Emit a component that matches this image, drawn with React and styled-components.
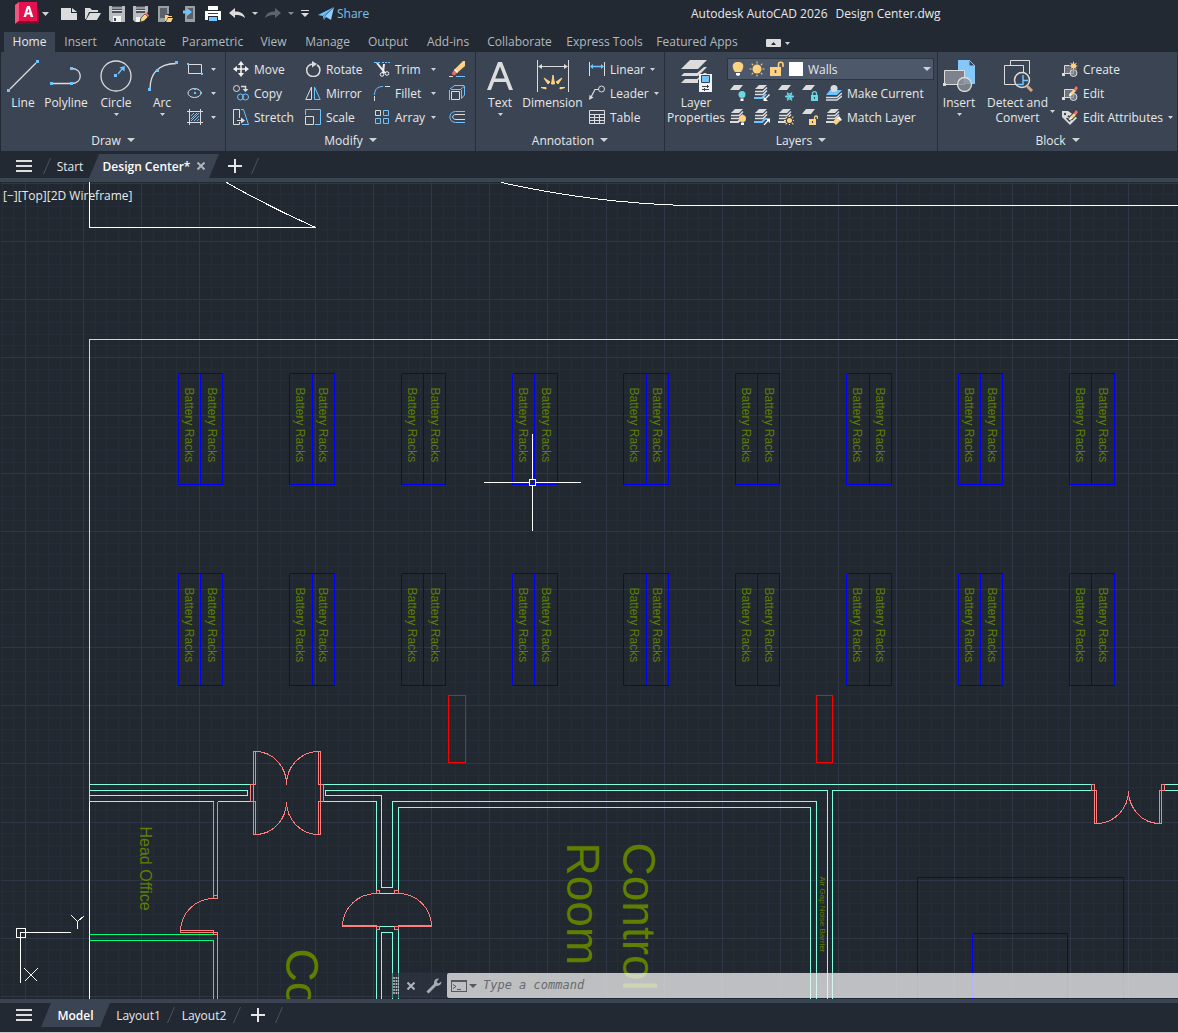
import React, { memo, useState, useCallback } from "react";
import styled, { createGlobalStyle, css } from "styled-components";

const GlobalStyle = createGlobalStyle`
  :root {
    --color-frame: #222933;
    --color-ribbon: #3b4453;
    --color-canvas: #212830;
    --color-field: #4d586b;
    --color-text: #e6e8ea;
    --color-muted: #b4b8bd;
    --color-icon: #dcdcdc;
    --color-blue: #6fc3ff;
    --color-yellow: #ffd27f;
    --color-teal: #66d9e4;
  }
  * {
    box-sizing: border-box;
  }
  body {
    margin: 0;
    background: var(--color-frame);
  }
  body, button, input, select {
    font-family: "Open Sans", "Noto Sans", sans-serif;
    font-size: 12px;
    line-height: 15px;
    color: var(--color-text);
  }
  button {
    margin: 0;
    padding: 0;
    border: 0;
    background: none;
    white-space: nowrap;
  }
  svg {
    display: block;
    flex: none;
  }
`;

/* ---------- palette shortcuts for the drawings ---------- */

const W = "var(--color-icon)";
const B = "var(--color-blue)";
const Y = "var(--color-yellow)";
const T = "var(--color-teal)";

/* ---------- icons ---------- */

const Svg = ({ w = 16, h = w, children }) => (
  <svg width={w} height={h} viewBox={`0 0 ${w} ${h}`} fill="none" aria-hidden="true">
    {children}
  </svg>
);

const Caret = ({ w = 5, color = "#d0d2d5" }) => (
  <Svg w={w} h={Math.ceil(w / 2)}>
    <path d={`M0 0H${w}L${w / 2} ${Math.ceil(w / 2)}Z`} fill={color} />
  </Svg>
);

const Dot = ({ x, y, s = 3 }) => (
  <rect x={x} y={y} width={s} height={s} fill={B} />
);

const Sheet = ({ y, fill = W }) => <path d={`M4 ${y}H13L9 ${y + 5}H0Z`} fill={fill} />;

const Stack = ({ blue }) => (
  <>
    <path d="M5 0H13L9 4H1Z" fill={W} />
    <path d="M1 6.500H9L13 2.500" stroke={W} strokeWidth="1.500" />
    <path d="M1 9.500H9L13 5.500" stroke={W} strokeWidth="1.500" />
    <path d="M0 13H8L12 9" stroke={blue ? B : W} strokeWidth="2" />
  </>
);

const PlainStar = ({ x, y, r = 3, color = Y }) => (
  <g stroke={color} strokeWidth="1">
    <circle cx={x} cy={y} r={r} fill={color} stroke="none" />
    {[0, 45, 90, 135, 180, 225, 270, 315].map((a) => (
      <path key={a} d={`M${x + r + 1} ${y}h2`} transform={`rotate(${a} ${x} ${y})`} />
    ))}
  </g>
);

const Pencil = () => (
  <>
    <path d="M7 11L8 8L12 4L14 6L10 10Z" fill={Y} />
    <path d="M12 4L14 1L16 3L14 6Z" fill="#ff6b6b" />
    <path d="M7 11L8 8L10 10Z" fill="#fff" />
  </>
);

const BlockBase = () => (
  <>
    <path d="M2.500 4.500H11.500V12.500H2.500Z" fill="#6c737e" stroke={W} />
    <rect x="0" y="12" width="3" height="3" fill={W} />
    <circle cx="11.500" cy="12" r="3.500" fill="#8a9099" fillOpacity=".7" stroke={W} />
  </>
);

const icons = {
  logo: (
    <Svg w={24} h={23}>
      <path d="M3 3L8 0H22V18L15 22H0V9Z" fill="#c2103f" />
      <path d="M0 3L4 0V19L0 22Z" fill="#f2557d" />
      <path d="M4 0H22V19H4Z" fill="#e51050" />
      <path d="M4 19H22L24 22H0Z" fill="#7d0a26" />
      <path d="M22 4L24 8V22L22 19Z" fill="#8e0b2b" />
      <path
        d="M8.500 15L12 4H14.800L18.300 15H15.600L15 12.600H11.700L11 15ZM12.300 10.500H14.400L13.400 6.600Z"
        fill="#fff"
        fillRule="evenodd"
      />
    </Svg>
  ),
  fresh: (
    <Svg>
      <path d="M0 2H10V7H16V14H0Z" fill={W} />
      <path d="M11 2L16 6H11Z" fill={W} />
    </Svg>
  ),
  open: (
    <Svg>
      <path d="M0 2H5L7 4H13V6H4L1 13H0Z" fill={W} />
      <path d="M5 7H16L12 14H1Z" fill={W} />
    </Svg>
  ),
  save: (
    <Svg>
      <path d="M0 0H16V16H2L0 14Z" fill="#b9bbbe" />
      <path d="M3 0H13V7H3Z" fill="#4a515c" />
      <path d="M3 2H13M3 4.500H13" stroke={W} />
      <path d="M4 10H12V16H4Z" fill="#f4f4f4" />
      <path d="M5 12H7V15H5Z" fill="#3b4453" />
    </Svg>
  ),
  saveAs: (
    <Svg>
      <path d="M0 0H15V6L6 15V16H2L0 14Z" fill="#b9bbbe" />
      <path d="M3 0H12V7H3Z" fill="#4a515c" />
      <path d="M3 2H12M3 4.500H12" stroke={W} />
      <path d="M3 11H7V16H3Z" fill="#f4f4f4" />
      <path d="M7 16L8 12L12 8L15 11L11 15Z" fill={Y} stroke="#222933" strokeWidth=".6" />
      <path d="M12 8L13.500 6.500L16 9.500L15 11Z" fill="#ff6b6b" />
    </Svg>
  ),
  deviceOpen: (
    <Svg>
      <path d="M1 0H12V8H8V16H1Z" fill="#9b9ea3" />
      <path d="M3 2H10V12H3Z" fill="#5b616b" />
      <path d="M8 9H11L12 10H15V11H11L9 15H8Z" fill={Y} />
      <path d="M11 12H16L14 16H9Z" fill={Y} />
    </Svg>
  ),
  deviceSave: (
    <Svg>
      <path d="M4 0H14V16H4Z" fill="#9b9ea3" />
      <path d="M6 2H12V13H6Z" fill="#5b616b" />
      <path d="M2 4.500H6V2L11 6L6 10V7.500H2Z" fill={B} />
    </Svg>
  ),
  print: (
    <Svg>
      <path d="M3 0H13V4H3Z" fill="#fff" />
      <path d="M0 5H16V14H13V10H3V14H0Z" fill="#fff" />
      <path d="M3 7.500H13" stroke="#3b4453" />
      <path d="M4 11H12V15H4Z" fill={B} />
    </Svg>
  ),
  undo: (
    <Svg>
      <path d="M0 7L6 2V5.500C11 5.500 15 7 16 12C13 9.500 10 9 6 9V12Z" fill={W} />
    </Svg>
  ),
  redo: (
    <Svg>
      <path d="M16 7L10 2V5.500C5 5.500 1 7 0 12C3 9.500 6 9 10 9V12Z" fill="#5d646e" />
    </Svg>
  ),
  custom: (
    <Svg w={8} h={8}>
      <path d="M0 .5H8" stroke={W} />
      <path d="M0 3H8L4 7Z" fill={W} />
    </Svg>
  ),
  plane: (
    <Svg w={16} h={14}>
      <path d="M0 8L16 0L5 9Z" fill={B} />
      <path d="M16 0L13 13L8 10L6 13L5 9.500Z" fill="#8fcfff" />
      <path d="M6 13L7 9L16 0" stroke="#2b5f8c" strokeWidth=".7" />
    </Svg>
  ),
  ribbonToggle: (
    <Svg w={15} h={8}>
      <rect width="15" height="8" rx="1" fill={W} />
      <path d="M5 6L7.500 3L10 6Z" fill="#222933" />
    </Svg>
  ),
  menu: (
    <Svg w={16} h={12}>
      <path d="M0 1H16M0 6H16M0 11H16" stroke={W} strokeWidth="2" />
    </Svg>
  ),
  plus: (
    <Svg w={14}>
      <path d="M7 0V14M0 7H14" stroke="#e6e6e6" strokeWidth="2" />
    </Svg>
  ),
  close: (
    <Svg w={8}>
      <path d="M.5 .5L7.500 7.500M7.500 .5L.5 7.500" stroke="#b0b4ba" strokeWidth="2" />
    </Svg>
  ),
  slash: (
    <Svg w={8} h={16}>
      <path d="M.5 16L7.500 0" stroke="#4a5260" />
    </Svg>
  ),

  /* draw */
  line: (
    <Svg w={32}>
      <path d="M3 29L29 3" stroke={W} strokeWidth="1.300" />
      <Dot x={0} y={29} />
      <Dot x={29} y={0} />
    </Svg>
  ),
  polyline: (
    <Svg w={32}>
      <path d="M1 23.500H21M22 8.500C33 8.500 33 23.500 22 23.500" stroke={W} strokeWidth="1.300" />
      <Dot x={0} y={22} />
      <Dot x={20} y={22} />
      <Dot x={20} y={7} />
    </Svg>
  ),
  circle: (
    <Svg w={32}>
      <circle cx="16" cy="16" r="15" stroke={W} strokeWidth="1.300" />
      <path d="M18 14L22 9" stroke={B} strokeWidth="1.300" />
      <path d="M25 6L24.500 11.500L19.500 7.500Z" fill={B} />
      <Dot x={14} y={14} />
    </Svg>
  ),
  arc: (
    <Svg w={32}>
      <path d="M4 29C4 14 12 4 30 3.500" stroke={W} strokeWidth="1.300" />
      <Dot x={2} y={28} />
      <Dot x={10} y={9} />
      <Dot x={29} y={1} />
    </Svg>
  ),
  rect: (
    <Svg>
      <path d="M1.500 3.500H14.500V12.500H1.500Z" stroke={W} />
      <Dot x={0} y={2} s={2} />
      <Dot x={14} y={12} s={2} />
    </Svg>
  ),
  ellipse: (
    <Svg>
      <ellipse cx="7.500" cy="8" rx="6.500" ry="4.500" stroke={W} />
      <Dot x={7} y={3} s={2} />
      <Dot x={7} y={7} s={2} />
      <Dot x={13} y={7} s={2} />
    </Svg>
  ),
  hatch: (
    <Svg>
      <path d="M0 2.500H16M0 13.500H16M2.500 0V16M13.500 0V16" stroke={W} />
      <path d="M4 7L7 4M4 10L10 4M4 12L12 4M7 12L12 7M10 12L12 10" stroke={B} />
    </Svg>
  ),

  /* modify */
  move: (
    <Svg>
      <path d="M8 2V14M2 8H14" stroke="#f2f2f2" strokeWidth="1.500" />
      <path d="M8 0L11 4H5ZM8 16L11 12H5ZM0 8L4 5V11ZM16 8L12 5V11Z" fill="#f2f2f2" />
    </Svg>
  ),
  copy: (
    <Svg>
      <circle cx="3.500" cy="3.500" r="3" stroke={W} />
      <path d="M8 1.500H12.500V4" stroke={W} strokeWidth="1.500" />
      <path d="M9.500 4H15.500L12.500 7Z" fill={W} />
      <circle cx="7.500" cy="12" r="3" stroke={B} />
      <circle cx="12.500" cy="12" r="3" stroke={B} />
    </Svg>
  ),
  stretch: (
    <Svg>
      <path d="M6.500 9V.5H.5V15.500H6.500V13" stroke={W} />
      <path d="M4 11.500H9" stroke={W} />
      <path d="M8 8.500L12 11.500L8 14.500Z" fill={W} />
      <path d="M8 .5H10.500L15.500 15.500H9" stroke={B} />
    </Svg>
  ),
  rotate: (
    <Svg>
      <path d="M8.500 3C-1 3 0 15.500 8 15.500C16 15.500 16.500 6.500 12 4" stroke={W} strokeWidth="1.500" />
      <path d="M7 0L12 3L7 6.500Z" fill={W} />
    </Svg>
  ),
  mirror: (
    <Svg>
      <path d="M6.500 2V14.500H.8Z" stroke={W} />
      <path d="M9.500 2V14.500H15.200Z" stroke={B} />
    </Svg>
  ),
  scale: (
    <Svg>
      <path d="M.5 6V.5H15.500V15.500H10" stroke={B} />
      <path d="M.5 7.500H8.500V15.500H.5Z" stroke={W} />
    </Svg>
  ),
  trim: (
    <Svg>
      <path d="M0 1.500H3M4 1.500H6M8 1.500H10M11 1.500H13M14 1.500H16" stroke={B} />
      <path d="M3 2L11 12M10 3L9 12" stroke="#f0f0f0" strokeWidth="2" />
      <circle cx="8" cy="13.500" r="1.800" stroke="#f0f0f0" />
      <circle cx="13" cy="12.500" r="1.800" stroke="#f0f0f0" />
    </Svg>
  ),
  fillet: (
    <Svg>
      <path d="M.5 16V11" stroke={W} />
      <path d="M.5 10C.5 4 4 1.500 9 1.500" stroke={B} />
      <path d="M11 1.500H16" stroke={W} />
    </Svg>
  ),
  array: (
    <Svg>
      <path d="M1.500 1.500H6.500V6.500H1.500Z" stroke={W} />
      <path d="M9.500 1.500H14.500V6.500H9.500ZM1.500 9.500H6.500V14.500H1.500ZM9.500 9.500H14.500V14.500H9.500Z" stroke={B} />
    </Svg>
  ),
  erase: (
    <Svg>
      <path d="M14 0H16V5L8 12L5 9Z" fill={Y} />
      <path d="M5 9L8 12L6 14Q3 15 3 12Z" fill="#ff6464" />
      <path d="M5 9L6 8L9 11L8 12Z" fill="#fff" />
      <path d="M0 15.500H4" stroke={W} />
      <path d="M7 15.500H16" stroke={B} />
    </Svg>
  ),
  explode: (
    <Svg>
      <path d="M2.500 6.500H10.500V14.500H2.500Z" stroke={W} />
      <path d="M.5 5V15M1 4L5 1M5 .5H15M11 5L15.500 1V10L12.500 13.500V5" stroke={B} />
      <path d="M2 4.500H12" stroke={B} />
    </Svg>
  ),
  offset: (
    <Svg>
      <path d="M16 2.500H6.500C-1 2.500-1 13.500 6.500 13.500H16" stroke={B} />
      <path d="M16 5.500H7C2.500 5.500 2.500 10.500 7 10.500H16" stroke={W} />
    </Svg>
  ),

  /* annotation */
  text: (
    <Svg w={32}>
      <path
        d="M3 30L14 2H18L29 30H25L22 22H10L7 30ZM11.300 18.500H20.700L16 6.500Z"
        fill={W}
        fillRule="evenodd"
      />
    </Svg>
  ),
  dimension: (
    <Svg w={32}>
      <path d="M.5 0V32M31.500 0V32M3 6.500H29" stroke={W} />
      <path d="M1 6.500L5 4V9ZM31 6.500L27 4V9Z" fill={W} />
      <path
        d="M14.500 24L16 15L17.500 24ZM11 24L7 18L13 22ZM21 24L25 18L19 22ZM9 29L4 27.500H9ZM23 29L28 27.500H23Z"
        fill={Y}
        stroke={Y}
      />
    </Svg>
  ),
  linear: (
    <Svg>
      <path d="M.5 1V15M15.500 1V15" stroke={W} />
      <path d="M2 5.500H14" stroke={B} strokeWidth="1.500" />
      <path d="M1 5.500L4 3V8ZM15 5.500L12 3V8Z" fill={B} />
    </Svg>
  ),
  leader: (
    <Svg>
      <circle cx="12.500" cy="4" r="3" stroke={W} />
      <path d="M9.500 4.500H6L2 12" stroke={W} strokeWidth="1.200" />
      <path d="M0 15L.5 10L4.500 12.500Z" fill={W} />
    </Svg>
  ),
  table: (
    <Svg>
      <path d="M.5 1.500H15.500V14.500H.5ZM0 5.500H16M0 8.500H16M0 11.500H16M5.500 5V14M10.500 5V14" stroke={W} />
    </Svg>
  ),

  /* layers */
  layerProps: (
    <Svg w={32}>
      <path d="M10 0H27L18 9H1Z" fill={W} />
      <path d="M1 16H18L27 7H24L17 13H4Z" fill={W} />
      <path d="M1 23H18V20L27 13H24L17 19H5Z" fill={W} />
      <path d="M19 14H32V32H19Z" fill="#f2f2f2" />
      <path d="M21.500 15.500H29.500V22.500H21.500Z" fill={B} stroke="#3b4453" />
      <path d="M22 26.500H29M22 29.500H29M27.500 25V28M24.500 28V31" stroke="#3b4453" />
    </Svg>
  ),
  bulb: (
    <Svg w={12} h={16}>
      <path d="M6 1C-1.500 1 .5 8 3 11H9C11.500 8 13.500 1 6 1Z" fill={Y} />
      <path d="M4 12H8V14L6 15L4 14Z" fill="#fff" />
    </Svg>
  ),
  sun: (
    <Svg>
      <PlainStar x={8} y={8} r={4.500} />
    </Svg>
  ),
  lock: (
    <Svg w={14} h={16}>
      <path d="M8.500 7V3.500C8.500 .5 13 .5 13 3.500V6" stroke={Y} strokeWidth="1.600" />
      <path d="M0 6H11V15H0Z" fill={Y} />
      <path d="M5.500 9V12" stroke="#4d586b" strokeWidth="1.600" />
    </Svg>
  ),
  layOff: (
    <Svg>
      <Sheet y={0} />
      <circle cx="12" cy="9.500" r="3.500" fill={T} />
      <path d="M10.500 13.500H13.500V16H10.500Z" fill="#fff" />
    </Svg>
  ),
  layIso: (
    <Svg>
      <Stack blue />
      <path d="M15.500 9.500L11 14" stroke="#fff" strokeWidth="1.300" />
      <path d="M9.500 16V11.500L14 16Z" fill="#fff" />
    </Svg>
  ),
  layFreeze: (
    <Svg>
      <Sheet y={0} />
      <path d="M7 11.500H16M9.300 7.500L13.800 15.500M13.800 7.500L9.300 15.500" stroke={T} strokeWidth="1.500" />
      <circle cx="11.500" cy="11.500" r="2.800" stroke={T} />
    </Svg>
  ),
  layLock: (
    <Svg>
      <Sheet y={0} />
      <path d="M10.500 10V8.500C10.500 6 14.500 6 14.500 8.500V10" stroke={T} strokeWidth="1.300" />
      <path d="M9 10H16V16H9Z" fill={T} />
      <path d="M12.500 12V14" stroke="#3b4453" />
    </Svg>
  ),
  makeCurrent: (
    <Svg>
      <path d="M4 5H16L11 10H0Z" fill={B} />
      <circle cx="8" cy="3.500" r="3.500" fill={W} />
      <path d="M0 12.500H11L16 8M0 15H11L16 11" stroke={W} strokeWidth="1.500" />
    </Svg>
  ),
  layOn: (
    <Svg>
      <Stack />
      <circle cx="12.500" cy="9.500" r="3.500" fill={Y} />
      <path d="M11 13.500H14V16H11Z" fill="#fff" />
    </Svg>
  ),
  layUniso: (
    <Svg>
      <Stack blue />
      <path d="M10 16L14.500 11" stroke="#fff" strokeWidth="1.300" />
      <path d="M16 9.500V14L11.500 9.500Z" fill="#fff" />
    </Svg>
  ),
  layThaw: (
    <Svg>
      <Stack />
      <circle cx="11.500" cy="11.500" r="4" fill="#3b4453" />
      <PlainStar x={11.5} y={11.5} r={2.5} />
    </Svg>
  ),
  layUnlock: (
    <Svg>
      <Sheet y={0} />
      <path d="M12.500 10V8.500C12.500 6.500 15.500 6.500 15.500 8.500V10" stroke={Y} strokeWidth="1.300" />
      <path d="M7 10H14V16H7Z" fill={Y} />
      <path d="M10.500 12V14" stroke="#3b4453" />
    </Svg>
  ),
  matchLayer: (
    <Svg>
      <Stack />
      <path d="M7 13L11 9L14 12L10 16Z" fill={Y} />
      <path d="M11 9L13 7L16 11L14 12Z" fill="#fff" />
    </Svg>
  ),

  /* block */
  insert: (
    <Svg w={32}>
      <path d="M15 0H26L32 6V24H15Z" fill="#84c8fb" />
      <path d="M26 0V6H32Z" fill="#3b4453" stroke="#84c8fb" />
      <path d="M1.500 10.500H21.500V24.500H1.500Z" fill="#7c838d" stroke={W} />
      <rect x="0" y="23" width="3" height="3" fill={W} />
      <circle cx="21.500" cy="24.500" r="7" fill="#8a9099" fillOpacity=".8" stroke={W} strokeWidth="1.300" />
    </Svg>
  ),
  detect: (
    <Svg w={32}>
      <path d="M8.500 6V.5H27.500V14" stroke={W} />
      <path d="M14 24.500H2.500V5.500H21.500V12" stroke={W} />
      <circle cx="20" cy="20" r="7.500" fill="#3b4453" stroke={W} strokeWidth="1.500" />
      <path d="M15 24.500H21V15M21 20.500H26" stroke={B} strokeWidth="1.500" />
      <path d="M25 26L30 31" stroke="#d8a878" strokeWidth="3" />
    </Svg>
  ),
  blockCreate: (
    <Svg>
      <BlockBase />
      <circle cx="11.500" cy="4.500" r="4" fill="#3b4453" />
      <path d="M11.500 0L12.500 3L15 1.500L13.500 4L16 5L13.500 6L15 8.500L12.500 7L11.500 9L10.500 7L8 8.500L9.500 6L7 5L9.500 4L8 1.500L10.500 3Z" fill={Y} />
    </Svg>
  ),
  blockEdit: (
    <Svg>
      <BlockBase />
      <Pencil />
    </Svg>
  ),
  attributes: (
    <Svg>
      <path d="M0 2H6L9 4L15 9L8 16L0 8Z" fill={W} />
      <circle cx="3" cy="5" r="1.200" fill="#3b4453" />
      <path d="M4.500 9L8 12.500M6 8L7 6.500" stroke="#3b4453" strokeWidth="1.500" />
      <path d="M6 12L7 7.500L12 3L15 6L10.500 11Z" fill="#3b4453" />
      <Pencil />
    </Svg>
  ),

  /* command line */
  grip: (
    <Svg w={6} h={17}>
      <path d="M1 0V17M3.500 0V17M5.800 0V17" stroke="#b6babf" strokeWidth="1.600" strokeDasharray="2 1" />
    </Svg>
  ),
  wrench: (
    <Svg>
      <path d="M1.500 14.500L9.500 6.500" stroke="#a8acb2" strokeWidth="3" />
      <path d="M13 0.500C9 0 7 4 8.500 7C11.500 9 15.500 7.500 15.500 3.500L12.500 5.500L10.500 4Z" fill="#a8acb2" />
    </Svg>
  ),
  prompt: (
    <Svg w={16} h={12}>
      <rect x=".5" y=".5" width="15" height="11" stroke="#55595e" />
      <path d="M0 1.500H16" stroke="#55595e" />
      <path d="M2 4.500L5 6.500L2 8.500M6 9.500H10" stroke="#55595e" />
    </Svg>
  ),
};

/* ---------- shell ---------- */

const Shell = styled.div`
  display: flex;
  flex-direction: column;
  height: 100vh;
  overflow: hidden;
  border-bottom: 1px solid #c9cacb;
`;

const TitleBar = styled.header`
  display: flex;
  align-items: center;
  height: 27px;
`;

const QuickAccess = styled.div`
  display: flex;
  align-items: center;
  flex: 0 1 691px;
  padding-left: 15px;
`;

const AppMenu = styled.button`
  display: flex;
  align-items: center;
  gap: 3px;
  margin-right: 12px;
`;

const IconRow = styled.div`
  display: flex;
  align-items: center;
  gap: ${({ $gap }) => $gap}px;
  & + & {
    margin-left: 8px;
  }
`;

const Share = styled.button`
  display: flex;
  align-items: center;
  gap: 3px;
  margin-left: 9px;
  color: #7cc0ee;
`;

const Title = styled.div`
  display: flex;
  gap: 8px;
  white-space: nowrap;
`;

const RibbonTabs = styled.nav`
  display: flex;
  align-items: flex-end;
  height: 25px;
  padding-left: 4px;
`;

const RibbonTab = styled.button`
  width: ${({ $w }) => $w}px;
  height: 20px;
  padding-bottom: 2px;
  color: var(--color-muted);
  ${({ $active }) =>
    $active &&
    css`
      color: var(--color-text);
      background: var(--color-ribbon);
    `}
`;

const RibbonToggle = styled.button`
  display: flex;
  align-items: center;
  gap: 4px;
  height: 18px;
  margin-left: 21px;
`;

/* ---------- ribbon ---------- */

const Ribbon = styled.div`
  display: flex;
  background: var(--color-ribbon);
  border-left: 1px solid var(--color-frame);
`;

const PanelBox = styled.section`
  display: flex;
  flex-direction: column;
  flex: ${({ $grow }) => ($grow ? "1 0" : "0 0")} ${({ $w }) => $w}px;
  height: 99px;
  padding-top: 5px;
  border-right: 1px solid #272e39;
`;

const PanelTools = styled.div`
  display: flex;
  height: 72px;
  padding-left: ${({ $left }) => $left || 0}px;
`;

const PanelName = styled.button`
  display: flex;
  align-items: center;
  justify-content: center;
  gap: 6px;
  height: 22px;
`;

const Column = styled.div`
  display: grid;
  grid-auto-rows: 24px;
  align-content: start;
  width: ${({ $w }) => ($w ? `${$w}px` : "auto")};
  margin-left: ${({ $left }) => $left || 0}px;
`;

const BigTool = styled.button`
  display: flex;
  flex-direction: column;
  align-items: center;
  flex: 0 0 ${({ $w }) => $w}px;
  min-width: 0;
  margin-left: ${({ $left }) => $left || 0}px;
  padding-top: 3px;
  white-space: pre;
  > span {
    margin: 3px -20px 3px;
  }
`;

const SideCaret = styled.button`
  display: flex;
  width: 14px;
  padding: 53px 0 0 2px;
  align-items: flex-start;
`;

const SmallTool = styled.button`
  display: flex;
  align-items: center;
  gap: 5px;
  > svg + svg {
    margin-left: 3px;
  }
  > span + svg {
    margin-left: ${({ $push }) => ($push ? "auto" : "0")};
  }
`;

const LayerField = styled.div`
  display: flex;
  align-items: center;
  width: 207px;
  height: 22px;
  margin-top: 1px;
  padding: 0 2px 0 4px;
  background: var(--color-field);
  border: 1px solid #2c3440;
`;

const FieldIcons = styled.span`
  display: flex;
  align-items: center;
  gap: 5px;
`;

const Swatch = styled.i`
  width: 14px;
  height: 14px;
  background: #fff;
`;

const LayerSelect = styled.select`
  flex: 1;
  min-width: 0;
  padding: 0 0 0 5px;
  border: 0;
  appearance: none;
  background: none;
`;

const LayerTools = styled.div`
  display: flex;
  align-items: center;
  gap: 8px;
  padding-left: 3px;
`;

const Panel = ({ name, w, grow, left, children }) => (
  <PanelBox $w={w} $grow={grow}>
    <PanelTools $left={left}>{children}</PanelTools>
    <PanelName>
      {name}
      <Caret w={8} />
    </PanelName>
  </PanelBox>
);

const Big = ({ icon, label, w, left, caret }) => (
  <BigTool $w={w} $left={left}>
    {icons[icon]}
    <span>{label}</span>
    {caret && <Caret />}
  </BigTool>
);

const Small = ({ icon, label, caret, ...rest }) => (
  <SmallTool aria-label={label || icon} {...rest}>
    {icons[icon]}
    {label && <span>{label}</span>}
    {caret && <Caret />}
  </SmallTool>
);

/* ---------- document tabs ---------- */

const TabStrip = styled.nav`
  display: flex;
  align-items: ${({ $bottom }) => ($bottom ? "flex-start" : "flex-end")};
  height: ${({ $bottom }) => ($bottom ? 33 : 31)}px;
  padding-left: 16px;
  ${({ $bottom }) =>
    $bottom ? "border-top: 4px solid #3b4453;" : "border-bottom: 4px solid #3b4453;"}
`;

const StripItem = styled.button`
  display: flex;
  align-items: center;
  justify-content: center;
  height: 24px;
  width: ${({ $w }) => $w}px;
  margin-right: ${({ $right }) => $right || 0}px;
`;

const ActiveTab = styled(StripItem)`
  gap: 7px;
  font-weight: 600;
  color: #fff;
  background: var(--color-ribbon);
  clip-path: polygon(10px 0, 100% 0, calc(100% - 10px) 100%, 0 100%);
`;

const Separator = styled.span`
  display: flex;
  align-items: center;
  height: 24px;
`;

/* ---------- drawing area ---------- */

const Canvas = styled.main`
  position: relative;
  flex: 1;
  min-height: 0;
  overflow: hidden;
  background: var(--color-canvas);
  > svg {
    width: 100%;
    height: 100%;
    font-family: "Liberation Sans", Arial, sans-serif;
  }
`;

const ViewControls = styled.div`
  position: absolute;
  top: 6px;
  left: 3px;
  display: flex;
`;

const CommandLine = styled.div`
  position: absolute;
  left: 391px;
  right: 0;
  bottom: 1px;
  display: flex;
  height: 25px;
`;

const CommandTools = styled.div`
  display: flex;
  align-items: center;
  width: 56px;
  padding-left: 2px;
  background: rgba(48, 55, 70, 0.6);
`;

const CommandButton = styled.button`
  display: flex;
  justify-content: center;
  width: 23px;
`;

const CommandField = styled.label`
  display: flex;
  align-items: center;
  gap: 2px;
  flex: 1;
  padding-left: 4px;
  border-radius: 2px 0 0 2px;
  background: rgba(241, 241, 242, 0.75);
`;

const CommandInput = styled.input`
  flex: 1;
  min-width: 0;
  padding: 0 0 0 4px;
  border: 0;
  outline: 0;
  background: none;
  font-family: "DejaVu Sans Mono", monospace;
  font-style: italic;
  color: #333;
  &::placeholder {
    color: #666a6e;
    opacity: 1;
  }
`;

const gridPath = (step) => {
  let d = "";
  for (let i = -25; i < 220 * (11.612 / step); i += 1) {
    const x = Math.floor(25.4 + i * step);
    const y = Math.floor(241.4 + i * step);
    d += `M${x} 0V2400M0 ${y}H3200`;
  }
  return d;
};

const minorGrid = gridPath(11.612);
const majorGrid = gridPath(58.06);

// x of the left edge, the middle line and the right edge, then which of them are bright
const racks = [
  [178, 200, 222, "111"],
  [289, 312, 334, "011"],
  [401, 423, 445, "000"],
  [512, 534, 557, "110"],
  [623, 646, 668, "011"],
  [735, 757, 779, "000"],
  [846, 869, 891, "100"],
  [958, 980, 1002, "111"],
  [1069, 1091, 1114, "001"],
];

const Note = ({ x, y, size, children }) => (
  <text transform={`translate(${x} ${y}) rotate(90)`} fontSize={size} fill="#5f7f00" stroke="none">
    {children}
  </text>
);

const Rack = ({ rack, top, bottom, brightBase }) => {
  const [left, , right, bright] = rack;
  return (
    <g>
      <path d={`M${left} ${top}H${right}`} stroke="#0000c4" />
      {rack.slice(0, 3).map((x, i) => (
        <path key={x} d={`M${x} ${top}V${bottom}`} stroke={bright[i] === "1" ? "#00f" : "#0000c4"} />
      ))}
      <path d={`M${left} ${bottom}H${right}`} stroke={brightBase ? "#00f" : "#0000c4"} />
      <Note x={left + 6} y={top + 14} size={12}>Battery Racks</Note>
      <Note x={left + 29} y={top + 14} size={12}>Battery Racks</Note>
    </g>
  );
};

const Drawing = memo(() => (
  <svg aria-label="Floor plan">
    <g transform="translate(0.5 -181.5)" fill="none" shapeRendering="crispEdges">
      <path d={minorGrid} stroke="#262d38" />
      <path d={majorGrid} stroke="#2f3645" />

      <g stroke="#fff">
        <path d="M89 180V227H315Q268 206 226 182" />
        <path d="M501 182Q590 202 684 205H3200" />
        <path d="M89 801V2000" />
      </g>

      <g stroke="#7fffdf">
        <path d="M3200 339H89V801" />
        <path d="M89 784H250M89 790H247V795H89M89 801H213M217 801H250" />
        <path d="M323 784H1091M827 2000V790H325V795H381V887H392V801H816V2000" />
        <path d="M323 801H376V890M398 890V807H810V2000M379 893H394M379 926H394" />
        <path d="M376 929V2000M398 929V2000M381 2000V932H392V2000" />
        <path d="M832 2000V790H1091M1164 784H3200M1164 790H3200" />
      </g>

      <g stroke="#00ff7f">
        <path d="M213 801V895M217 801V895M89 934H213M89 940H213V2000M217 934V2000" />
      </g>

      <g stroke="#ff7f7f">
        <path d="M213 895H217V898H213ZM213 932H217V934H213Z" />
        <path d="M213 898A33 33 0 0 0 180 930H213V932H180V930" />
        <path d="M253 784V751H255V784H250V801H255V834H253V784" />
        <path d="M320 784V751H318V784H323V801H318V834H320V784" />
        <path d="M255 751A31 33 0 0 1 286 784A32 33 0 0 1 318 751" />
        <path d="M255 834A31 33 0 0 0 286 801A32 33 0 0 0 318 834" />
        <path d="M376 890H379V893H376ZM394 890H398V893H394ZM376 926H379V929H376ZM394 926H398V929H394Z" />
        <path d="M376 893A34 33 0 0 0 342 926H376V925H342" />
        <path d="M398 893A33 33 0 0 1 431 926H398V925H431" />
        <path d="M1091 784H1094V790H1091ZM1094 790H1096V823H1094Z" />
        <path d="M1161 784H1164V790H1161ZM1159 790H1161V823H1159Z" />
        <path d="M1096 823A32 33 0 0 0 1128 790A31 33 0 0 0 1159 823" />
      </g>

      <path d="M448 695H465V762H448ZM816 695H832V762H816Z" stroke="#f00" />

      {racks.map((rack) => (
        <React.Fragment key={rack[0]}>
          <Rack rack={rack} top={373} bottom={484} brightBase />
          <Rack rack={rack} top={573} bottom={685} />
        </React.Fragment>
      ))}
      <path d="M917 2000V877H1123V2000M972 933H1067V2000" stroke="#0000c4" />
      <path d="M972 933V2000" stroke="#00f" />

      <Note x={139} y={826} size={16}>Head Office</Note>
      <Note x={622} y={842} size={46}>Control</Note>
      <Note x={566} y={842} size={46}>Room</Note>
      <Note x={285} y={948} size={46}>Co</Note>
      <Note x={819} y={876} size={8}>Air Gap Noise Barrier</Note>

      <g stroke="#fff">
        <path d="M16 928H25V937H16ZM70 932H20V982" />
        <path d="M71 915L77 921L84 915M77 921V928M24 968L37 981M37 968L24 981" />
        <path d="M529 479H535V485H529ZM483 482H529M535 482H580M532 433V479M532 485V530" />
      </g>
    </g>
  </svg>
));

const ribbonTabs = [
  ["Home", 51],
  ["Insert", 51],
  ["Annotate", 68],
  ["Parametric", 77],
  ["View", 45],
  ["Manage", 63],
  ["Output", 58],
  ["Add-ins", 62],
  ["Collaborate", 81],
  ["Express Tools", 89],
  ["Featured Apps", 96],
];

const fileIcons = ["fresh", "open", "save", "saveAs", "deviceOpen", "deviceSave", "print"];

const App = () => {
  const [tab, setTab] = useState("Home");
  const [command, setCommand] = useState("");
  const handleCommand = useCallback((event) => setCommand(event.target.value), []);

  return (
    <Shell>
      <GlobalStyle />
      <TitleBar>
        <QuickAccess>
          <AppMenu aria-label="Application menu">
            {icons.logo}
            <Caret w={7} />
          </AppMenu>
          <IconRow $gap={8}>
            {fileIcons.map((name) => (
              <button key={name} aria-label={name}>{icons[name]}</button>
            ))}
          </IconRow>
          <IconRow $gap={7}>
            <button aria-label="Undo">{icons.undo}</button>
            <button aria-label="Undo list"><Caret w={6} /></button>
            <button aria-label="Redo">{icons.redo}</button>
            <button aria-label="Redo list"><Caret w={6} color="#868b93" /></button>
            <button aria-label="Customize">{icons.custom}</button>
          </IconRow>
          <Share>
            {icons.plane}
            Share
          </Share>
        </QuickAccess>
        <Title>
          <span>Autodesk AutoCAD 2026</span>
          <span>Design Center.dwg</span>
        </Title>
      </TitleBar>

      <RibbonTabs>
        {ribbonTabs.map(([name, w]) => (
          <RibbonTab key={name} $w={w} $active={name === tab} onClick={() => setTab(name)}>
            {name}
          </RibbonTab>
        ))}
        <RibbonToggle aria-label="Minimize ribbon">
          {icons.ribbonToggle}
          <Caret />
        </RibbonToggle>
      </RibbonTabs>

      <Ribbon>
        <Panel name="Draw" w={225}>
          <Big icon="line" label="Line" w={44} />
          <Big icon="polyline" label="Polyline" w={42} />
          <Big icon="circle" label="Circle" w={58} caret />
          <Big icon="arc" label="Arc" w={34} caret />
          <Column $left={8}>
            <Small icon="rect" caret />
            <Small icon="ellipse" caret />
            <Small icon="hatch" caret />
          </Column>
        </Panel>

        <Panel name="Modify" w={250} left={7}>
          <Column $w={72}>
            <Small icon="move" label="Move" />
            <Small icon="copy" label="Copy" />
            <Small icon="stretch" label="Stretch" />
          </Column>
          <Column $w={69}>
            <Small icon="rotate" label="Rotate" />
            <Small icon="mirror" label="Mirror" />
            <Small icon="scale" label="Scale" />
          </Column>
          <Column $w={62}>
            <Small icon="trim" label="Trim" caret $push />
            <Small icon="fillet" label="Fillet" caret $push />
            <Small icon="array" label="Array" caret $push />
          </Column>
          <Column $left={13}>
            <Small icon="erase" />
            <Small icon="explode" />
            <Small icon="offset" />
          </Column>
        </Panel>

        <Panel name="Annotation" w={189}>
          <Big icon="text" label="Text" w={48} caret />
          <Big icon="dimension" label="Dimension" w={57} />
          <Column $left={8}>
            <Small icon="linear" label="Linear" caret />
            <Small icon="leader" label="Leader" caret />
            <Small icon="table" label="Table" />
          </Column>
        </Panel>

        <Panel name="Layers" w={273}>
          <Big icon="layerProps" label={"Layer\nProperties"} w={62} />
          <Column>
            <LayerField>
              <FieldIcons>
                {icons.bulb}
                {icons.sun}
                {icons.lock}
                <Swatch />
              </FieldIcons>
              <LayerSelect aria-label="Layer">
                <option>Walls</option>
              </LayerSelect>
              <Caret w={8} />
            </LayerField>
            <LayerTools>
              <Small icon="layOff" />
              <Small icon="layIso" />
              <Small icon="layFreeze" />
              <Small icon="layLock" />
              <Small icon="makeCurrent" label="Make Current" />
            </LayerTools>
            <LayerTools>
              <Small icon="layOn" />
              <Small icon="layUniso" />
              <Small icon="layThaw" />
              <Small icon="layUnlock" />
              <Small icon="matchLayer" label="Match Layer" />
            </LayerTools>
          </Column>
        </Panel>

        <Panel name="Block" w={240} grow>
          <Big icon="insert" label="Insert" w={42} caret />
          <Big icon="detect" label={"Detect and\nConvert"} w={61} left={7} />
          <SideCaret aria-label="Detect options">
            <Caret />
          </SideCaret>
          <Column>
            <Small icon="blockCreate" label="Create" />
            <Small icon="blockEdit" label="Edit" />
            <Small icon="attributes" label="Edit Attributes" caret />
          </Column>
        </Panel>
      </Ribbon>

      <TabStrip>
        <StripItem $w={16} $right={11} aria-label="File menu">{icons.menu}</StripItem>
        <Separator>{icons.slash}</Separator>
        <StripItem $w={38}>Start</StripItem>
        <ActiveTab $w={130}>
          Design Center*
          {icons.close}
        </ActiveTab>
        <StripItem $w={32} aria-label="New drawing">{icons.plus}</StripItem>
        <Separator>{icons.slash}</Separator>
      </TabStrip>

      <Canvas>
        <Drawing />
        <ViewControls>
          <button>[−]</button>
          <button>[Top]</button>
          <button>[2D Wireframe]</button>
        </ViewControls>
        <CommandLine>
          <CommandTools>
            {icons.grip}
            <CommandButton aria-label="Close">{icons.close}</CommandButton>
            <CommandButton aria-label="Customize">{icons.wrench}</CommandButton>
          </CommandTools>
          <CommandField>
            {icons.prompt}
            <Caret w={8} color="#55595e" />
            <CommandInput
              aria-label="Command"
              value={command}
              onChange={handleCommand}
              placeholder="Type a command"
            />
          </CommandField>
        </CommandLine>
      </Canvas>

      <TabStrip $bottom>
        <StripItem $w={16} $right={9} aria-label="Layout menu">{icons.menu}</StripItem>
        <ActiveTab $w={69}>Model</ActiveTab>
        <StripItem $w={57}>Layout1</StripItem>
        <Separator>{icons.slash}</Separator>
        <StripItem $w={58}>Layout2</StripItem>
        <Separator>{icons.slash}</Separator>
        <StripItem $w={34} aria-label="New layout">{icons.plus}</StripItem>
        <Separator>{icons.slash}</Separator>
      </TabStrip>
    </Shell>
  );
};

export default App;
